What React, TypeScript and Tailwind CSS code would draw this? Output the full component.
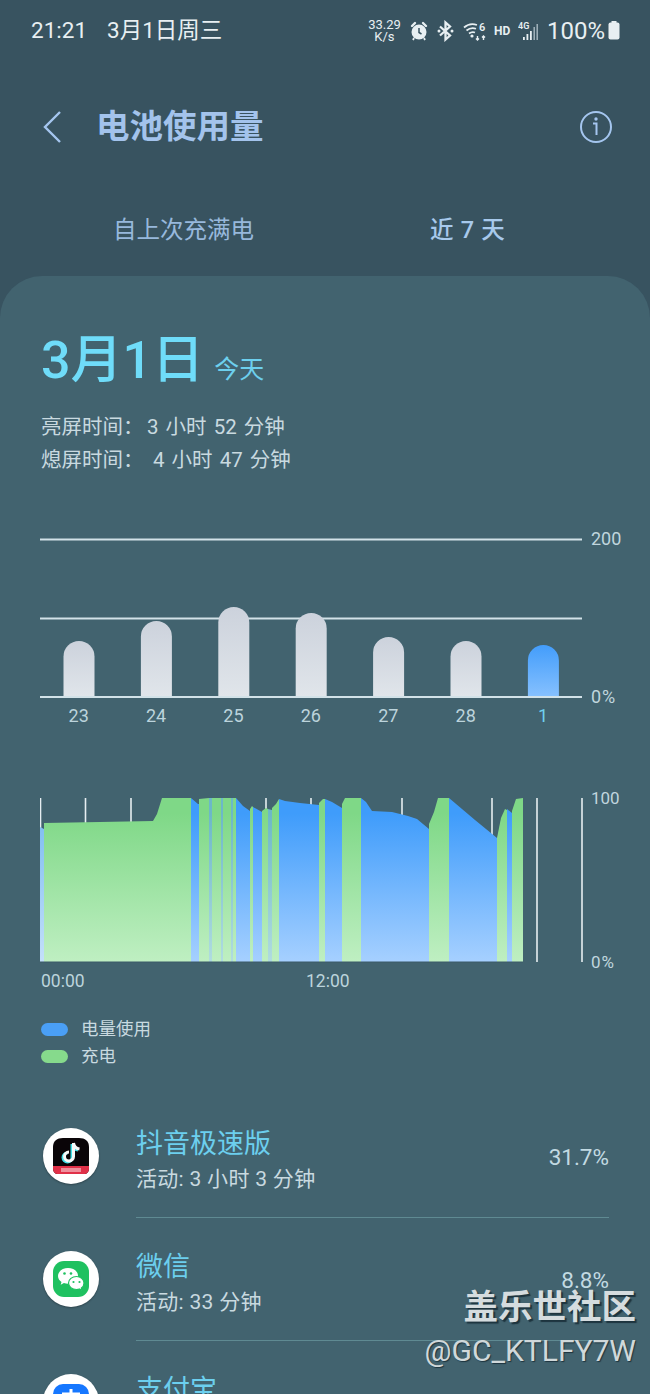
const font = "[font-family:Roboto,'Noto_Sans_CJK_SC',sans-serif]";

const days = [
  { label: "23", top: 641 },
  { label: "24", top: 621 },
  { label: "25", top: 607 },
  { label: "26", top: 613 },
  { label: "27", top: 637 },
  { label: "28", top: 641 },
  { label: "1", top: 645, today: true },
];

type Seg = { color: "b" | "g" | "lb" | "m"; pts: [number, number][] };

// battery area segments, x / y in page pixels
const segs: Seg[] = [
  { color: "lb", pts: [[40, 827], [44, 829]] },
  { color: "g", pts: [[44, 823], [100, 822], [153, 821], [157, 814], [162, 798], [191, 798]] },
  { color: "b", pts: [[191, 798], [198, 804], [199, 804]] },
  { color: "g", pts: [[199, 799], [209, 798]] },
  { color: "m", pts: [[209, 798], [212, 798]] },
  { color: "g", pts: [[212, 798], [221, 798]] },
  { color: "m", pts: [[221, 798], [223, 798]] },
  { color: "g", pts: [[223, 798], [231, 798]] },
  { color: "m", pts: [[231, 798], [233, 798]] },
  { color: "g", pts: [[233, 798], [236, 798]] },
  { color: "b", pts: [[236, 798], [243, 806], [250, 811]] },
  { color: "g", pts: [[250, 809], [252, 806], [253, 807]] },
  { color: "b", pts: [[253, 807], [262, 812]] },
  { color: "g", pts: [[262, 811], [266, 808], [268, 809]] },
  { color: "m", pts: [[268, 809], [272, 810]] },
  { color: "g", pts: [[272, 808], [276, 804], [279, 799]] },
  { color: "b", pts: [[279, 799], [285, 801], [300, 803], [319, 805]] },
  { color: "g", pts: [[319, 803], [323, 799], [325, 799]] },
  { color: "b", pts: [[325, 799], [332, 802], [342, 808]] },
  { color: "g", pts: [[342, 804], [345, 798], [361, 798]] },
  { color: "b", pts: [[361, 798], [366, 802], [372, 811], [392, 812], [408, 816], [417, 819], [429, 829]] },
  { color: "g", pts: [[429, 824], [434, 812], [438, 798], [449, 798]] },
  { color: "b", pts: [[449, 798], [475, 820], [497, 838]] },
  { color: "g", pts: [[497, 838], [501, 818], [505, 809], [507, 810]] },
  { color: "b", pts: [[507, 809], [512, 813]] },
  { color: "g", pts: [[512, 811], [516, 799], [523, 798]] },
];

const fills = { b: "url(#blueArea)", g: "url(#greenArea)", lb: "url(#lightBlueArea)", m: "url(#mixArea)" };

function segPath(s: Seg) {
  const line = s.pts.map(([x, y]) => `L${x - 40} ${y - 797}`).join(" ");
  const x0 = s.pts[0][0] - 40;
  const x1 = s.pts[s.pts.length - 1][0] - 40;
  return `M${x0} 165 ${line} L${x1} 165 Z`;
}

function StatusIcons() {
  return (
    <div className="flex items-center text-[#e8eff2]">
      <div className="flex flex-col items-center text-[13px] leading-[12px] w-[33px]">
        <span>33.29</span>
        <span>K/s</span>
      </div>
      {/* alarm */}
      <svg width="18" height="20" viewBox="0 0 18 20" className="ml-[9px]">
        <circle cx="9" cy="11" r="7.500" fill="#e8eff2" />
        <path d="M2 5l3-3M16 5l-3-3" stroke="#e8eff2" strokeWidth="2.400" strokeLinecap="round" />
        <path d="M9 7v4.500l2.500 1.500" stroke="#37525f" strokeWidth="1.500" fill="none" />
        <path d="M4 17l-1 2M14 17l1 2" stroke="#e8eff2" strokeWidth="1.800" />
      </svg>
      {/* bluetooth */}
      <svg width="17" height="22" viewBox="0 0 17 20" className="ml-[9px]">
        <path d="M3 5.500l10 9-4.500 4V1.500l4.500 4-10 9" fill="none" stroke="#e8eff2" strokeWidth="2.300" />
        <circle cx="2" cy="10" r="1.500" fill="#e8eff2" />
        <circle cx="15" cy="10" r="1.500" fill="#e8eff2" />
      </svg>
      {/* wifi 6 */}
      <svg width="25" height="20" viewBox="0 0 25 20" className="ml-[9px]">
        <path d="M1 6.500c4-3.500 9-4 13-2.500M3.500 9.500c3-2.500 6.500-2.800 9.500-1.800M6 12.500c2-1.500 4.200-1.700 6-1" fill="none" stroke="#e8eff2" strokeWidth="1.700" />
        <circle cx="9" cy="15" r="1.600" fill="#e8eff2" />
        <path d="M14.500 15v4M13 17.500l1.500 1.500 1.500-1.500M20.500 19v-4M19 16.500l1.500-1.500 1.500 1.500" fill="none" stroke="#e8eff2" strokeWidth="1.400" />
        <text x="16" y="10" fontSize="11" fontWeight="600" fill="#e8eff2" fontFamily="Roboto">6</text>
      </svg>
      <span className="ml-[6px] text-[12px] font-bold w-[16px]">HD</span>
      {/* 4G signal */}
      <svg width="22" height="20" viewBox="0 0 22 20" className="ml-[8px]">
        <text x="0" y="8" fontSize="9" fontWeight="600" fill="#e8eff2" fontFamily="Roboto">4G</text>
        <rect x="5" y="16" width="1.800" height="3" fill="#e8eff2" />
        <rect x="8.500" y="13" width="1.800" height="6" fill="#e8eff2" />
        <rect x="12" y="10" width="1.800" height="9" fill="#e8eff2" />
        <rect x="15.500" y="6" width="1.400" height="13" fill="#a9bac2" />
        <rect x="18.500" y="3" width="1.400" height="16" fill="#a9bac2" />
      </svg>
      <span className="ml-[7px] text-[24px] leading-none">100%</span>
      <svg width="12" height="19" viewBox="0 0 12 19" className="ml-[3px]">
        <rect x="3.500" y="0" width="5" height="2" fill="#e8eff2" />
        <rect x="0.500" y="1.500" width="11" height="17" rx="2" fill="#e8eff2" />
      </svg>
    </div>
  );
}

function TiktokIcon() {
  return (
    <svg width="36" height="36" viewBox="0 0 36 36">
      <path d="M10 0h16c6 0 10 3 10 9v21c0 4-2 6-5 6H5c-3 0-5-2-5-6V9c0-6 4-9 10-9z" fill="#0a0508" />
      <path d="M0 28h36v2c0 4-2 6-5 6H5c-3 0-5-2-5-6z" fill="#e03048" />
      <path d="M19 6v13.500a4.500 4.500 0 1 1-4.500-4.500M19 6c.5 3.500 3 5.500 6 6" fill="none" stroke="#40e0e8" strokeWidth="3" />
      <path d="M20.500 5v13.500a4.500 4.500 0 1 1-4.500-4.500M20.500 5c.5 3.500 3 5.500 6 6" fill="none" stroke="#f8f8f8" strokeWidth="3" />
      <path d="M8 30h20v4H8z" fill="#f4b8c0" opacity="0.7" />
    </svg>
  );
}

function WechatIcon() {
  return (
    <svg width="36" height="36" viewBox="0 0 36 36">
      <rect width="36" height="36" rx="11" fill="#1fc160" />
      <path d="M15 7c-5.500 0-10 3.500-10 8 0 2.500 1.400 4.600 3.500 6l-.8 2.800 3.200-1.700c1.300.4 2.700.6 4.100.6 5.500 0 10-3.500 10-8s-4.500-7.700-10-7.700z" fill="#fff" />
      <path d="M23.500 15.500c-4.400 0-8 2.900-8 6.500s3.600 6.500 8 6.500c1 0 2-.2 3-.5l2.500 1.400-.6-2.300c1.600-1.200 2.600-3 2.600-5.100 0-3.600-3.600-6.500-7.500-6.500z" fill="#fff" stroke="#1fc160" strokeWidth="1.200" />
      <circle cx="11.500" cy="12.500" r="1.300" fill="#1fc160" />
      <circle cx="18" cy="12.500" r="1.300" fill="#1fc160" />
      <circle cx="20.500" cy="21" r="1.100" fill="#1fc160" />
      <circle cx="26.500" cy="21" r="1.100" fill="#1fc160" />
    </svg>
  );
}

function AlipayIcon() {
  return (
    <svg width="36" height="36" viewBox="0 0 36 36">
      <rect width="36" height="36" rx="10" fill="#1677ff" />
      <path d="M18 5v14M9 10h18" stroke="#fff" strokeWidth="3" />
    </svg>
  );
}

const apps = [
  { name: "抖音极速版", time: "活动: 3 小时 3 分钟", pct: "31.7%", icon: <TiktokIcon /> },
  { name: "微信", time: "活动: 33 分钟", pct: "8.8%", icon: <WechatIcon /> },
  { name: "支付宝", time: "", pct: "", icon: <AlipayIcon /> },
];

export default function App() {
  return (
    <div className={`${font} relative w-[650px] h-[1394px] overflow-hidden bg-[#385360]`}>
      {/* status bar */}
      <div className="flex items-center justify-between h-[60px] pt-[1px] pl-[31px] pr-[30px] text-[#e8eff2]">
        <div className="flex items-center text-[22.500px] gap-[20px]">
          <span>21:21</span>
          <span>3月1日周三</span>
        </div>
        <StatusIcons />
      </div>

      {/* app bar */}
      <div className="flex items-center justify-between h-[72px] mt-[31px] pl-[41px] pr-[37px]">
        <div className="flex items-center">
          <svg width="22" height="34" viewBox="0 0 22 34">
            <path d="M19 2L4 17l15 15" fill="none" stroke="#a5c6ef" strokeWidth="2.400" />
          </svg>
          <span className="ml-[33px] text-[33.500px] font-bold leading-none text-[#a3c3ec]">电池使用量</span>
        </div>
        <svg width="34" height="34" viewBox="0 0 34 34">
          <circle cx="17" cy="17" r="15" fill="none" stroke="#a5c6ef" strokeWidth="2" />
          <path d="M14 13.500h3.500V25" fill="none" stroke="#a5c6ef" strokeWidth="2" />
          <circle cx="17" cy="9" r="1.700" fill="#a5c6ef" />
        </svg>
      </div>

      {/* tabs */}
      <div className="flex mt-[43px] h-[54px] items-start text-[23.500px]">
        <div className="w-[113px]" />
        <span className="text-[#97b8dc] leading-[48px]">自上次充满电</span>
        <span className="ml-[176px] font-medium text-[#a7c9ec] leading-[48px] tracking-[0.7px]">近 7 天</span>
      </div>

      {/* main card */}
      <div className="mt-[16px] h-[1200px] rounded-t-[42px] bg-[#42636f]">
        <div className="pt-[53px] pl-[41px] flex items-baseline">
          <span className="text-[52px] font-medium leading-[64px] text-[#6fdcf9]">3月1日</span>
          <span className="ml-[10px] text-[25px] text-[#6dd0ee]">今天</span>
        </div>
        <div className="mt-[18px] pl-[41px] text-[20.500px] leading-[33px] text-[#c9dae0] [word-spacing:2px]">
          <div className="flex">
            <span className="w-[106px]">亮屏时间：</span>
            <span>3 小时 52 分钟</span>
          </div>
          <div className="flex">
            <span className="w-[112px]">熄屏时间：</span>
            <span>4 小时 47 分钟</span>
          </div>
        </div>

        {/* 7 day chart */}
        <div className="mt-[51px] relative w-[650px] h-[196px]">
          <svg width="650" height="170" viewBox="0 0 650 170" className="block">
            <defs>
              <linearGradient id="greyBar" x1="0" y1="0" x2="0" y2="1">
                <stop offset="0" stopColor="#ccd2dc" />
                <stop offset="1" stopColor="#e0e5ea" />
              </linearGradient>
              <linearGradient id="blueBar" x1="0" y1="0" x2="0" y2="1">
                <stop offset="0" stopColor="#439dfb" />
                <stop offset="1" stopColor="#85c0fe" />
              </linearGradient>
            </defs>
            <path d="M40 11.500h542M40 90.500h542M40 169h542" stroke="#d2e2e8" strokeWidth="2" />
            {days.map((d, i) => {
              const x = 63.500 + i * 77.400;
              const top = d.top - 528;
              return (
                <path
                  key={d.label}
                  d={`M${x} 168 V${top + 15.500} a15.500 15.500 0 0 1 31 0 V168 Z`}
                  fill={d.today ? "url(#blueBar)" : "url(#greyBar)"}
                />
              );
            })}
          </svg>
          <span className="absolute left-[591px] top-0 text-[18px] leading-[22px] text-[#c0d6de]">200</span>
          <span className="absolute left-[591px] top-[158px] text-[18px] leading-[22px] text-[#c0d6de] tracking-[1px]">0%</span>
          <div className="flex pl-[40px] mt-[7px]">
            {days.map((d) => (
              <span
                key={d.label}
                className={`w-[77.400px] text-center text-[18px] leading-[22px] ${d.today ? "text-[#6fd0ee]" : "text-[#bcd4dc]"}`}
              >
                {d.label}
              </span>
            ))}
          </div>
        </div>

        {/* battery area chart */}
        <div className="mt-[73px] relative w-[650px] h-[167px]">
          <svg width="610" height="167" viewBox="0 0 610 167" className="ml-[40px] block">
            <defs>
              <linearGradient id="blueArea" gradientUnits="userSpaceOnUse" x1="0" y1="0" x2="0" y2="165">
                <stop offset="0.1" stopColor="#3f9cfb" />
                <stop offset="1" stopColor="#a6d0ff" />
              </linearGradient>
              <linearGradient id="greenArea" gradientUnits="userSpaceOnUse" x1="0" y1="0" x2="0" y2="165">
                <stop offset="0.1" stopColor="#7fd887" />
                <stop offset="1" stopColor="#bfefc2" />
              </linearGradient>
              <linearGradient id="lightBlueArea" gradientUnits="userSpaceOnUse" x1="0" y1="0" x2="0" y2="165">
                <stop offset="0.1" stopColor="#7cbcf0" />
                <stop offset="1" stopColor="#c4e0fa" />
              </linearGradient>
              <linearGradient id="mixArea" gradientUnits="userSpaceOnUse" x1="0" y1="0" x2="0" y2="165">
                <stop offset="0.1" stopColor="#6cb8c8" />
                <stop offset="1" stopColor="#b0dce0" />
              </linearGradient>
            </defs>
            {[0.5, 45.5, 91, 226, 271, 362, 452, 497, 542].map((x) => (
              <path key={x} d={`M${x} 1V165`} stroke="#e6eef1" strokeWidth="1.600" />
            ))}
            {segs.map((s, i) => (
              <path key={i} d={segPath(s)} fill={fills[s.color]} />
            ))}
            <path d="M0 165h483" stroke="#3a5a68" strokeWidth="1" />
          </svg>
          <span className="absolute left-[591px] top-[-10px] text-[17px] leading-[22px] text-[#c0d6de]">100</span>
          <span className="absolute left-[591px] top-[154px] text-[17px] leading-[22px] text-[#c0d6de] tracking-[1px]">0%</span>
        </div>
        <div className="flex pl-[41px] mt-[6px] text-[17.500px] leading-[22px] text-[#bcd4dc]">
          <span className="w-[265px]">00:00</span>
          <span>12:00</span>
        </div>

        {/* legend */}
        <div className="mt-[27px] pl-[41px] flex flex-col gap-[7px] text-[17.500px] leading-[20px] text-[#c9dae0]">
          <div className="flex items-center">
            <span className="w-[27px] h-[13px] rounded-full bg-[#4a9ff5]" />
            <span className="ml-[13px]">电量使用</span>
          </div>
          <div className="flex items-center">
            <span className="w-[27px] h-[13px] rounded-full bg-[#86da8c]" />
            <span className="ml-[13px]">充电</span>
          </div>
        </div>

        {/* app list */}
        <div className="mt-[29px] pl-[43px] pr-[41px] flex flex-col">
          {apps.map((app, i) => (
            <div key={app.name} className="flex h-[123px]">
              <div className="w-[56px] h-[56px] mt-[33px] rounded-full bg-white flex items-center justify-center shadow-[0_1px_2px_rgba(0,0,0,0.3)]">
                {app.icon}
              </div>
              <div className={`ml-[37px] flex-1 flex items-start justify-between ${i < 2 ? "border-b border-[#5f8a92]" : ""}`}>
                <div>
                  <div className="mt-[31px] text-[27px] leading-[36px] text-[#6ccfee]">{app.name}</div>
                  <div className="text-[21px] leading-[28px] text-[#c9dae0] mt-[3px] tracking-[0.3px]">{app.time}</div>
                </div>
                <div className="mt-[48px] text-[22.500px] leading-[28px] text-[#c2dae2]">{app.pct}</div>
              </div>
            </div>
          ))}
        </div>
      </div>

      {/* watermark */}
      <div className="absolute right-[14px] top-[1285px] text-right">
        <div className="text-[34.500px] leading-[44px] font-bold text-[#d5dcdf] [text-shadow:2px_2px_1px_rgba(20,40,50,0.8)]">盖乐世社区</div>
        <div className="text-[30px] leading-[44px] text-[#d0d8da] [text-shadow:1px_1px_1px_rgba(20,40,50,0.8)]">@GC_KTLFY7W</div>
      </div>
    </div>
  );
}
